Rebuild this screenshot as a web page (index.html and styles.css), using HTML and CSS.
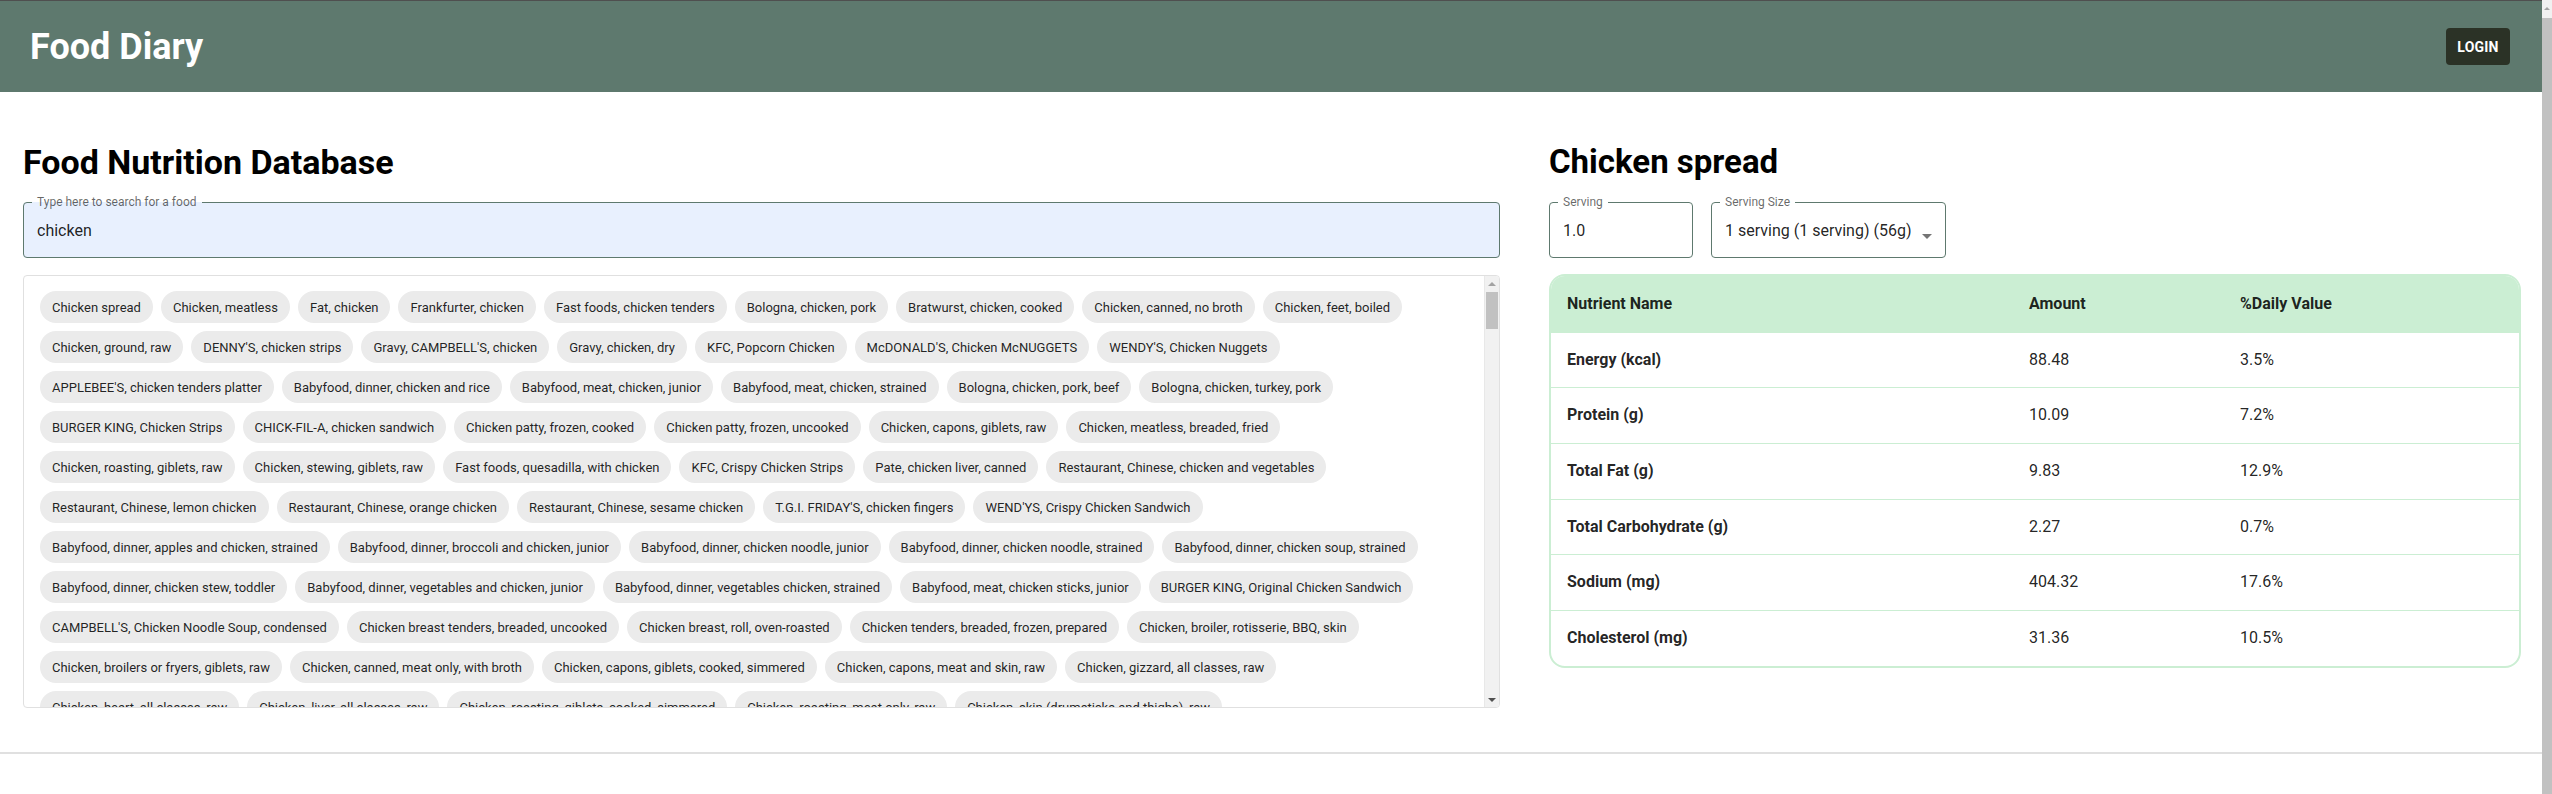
FILE: index.html
```html
<!DOCTYPE html>
<html lang="en">
<head>
<meta charset="utf-8">
<title>Food Diary</title>
<link rel="stylesheet" href="styles.css">
</head>
<body>
<header class="topbar">
  <div class="brand">Food Diary</div>
  <button class="login" type="button">LOGIN</button>
</header>
<main class="content">
  <section class="search-col">
    <h2 class="title title-db">Food Nutrition Database</h2>
    <fieldset class="field field-search">
      <legend>Type here to search for a food</legend>
      <div class="field-value">chicken</div>
    </fieldset>
    <div class="chip-panel">
      <div class="chip-list">
        <span class="chip">Chicken spread</span>
        <span class="chip">Chicken, meatless</span>
        <span class="chip">Fat, chicken</span>
        <span class="chip">Frankfurter, chicken</span>
        <span class="chip">Fast foods, chicken tenders</span>
        <span class="chip">Bologna, chicken, pork</span>
        <span class="chip">Bratwurst, chicken, cooked</span>
        <span class="chip">Chicken, canned, no broth</span>
        <span class="chip">Chicken, feet, boiled</span>
        <span class="chip">Chicken, ground, raw</span>
        <span class="chip">DENNY'S, chicken strips</span>
        <span class="chip">Gravy, CAMPBELL'S, chicken</span>
        <span class="chip">Gravy, chicken, dry</span>
        <span class="chip">KFC, Popcorn Chicken</span>
        <span class="chip">McDONALD'S, Chicken McNUGGETS</span>
        <span class="chip">WENDY'S, Chicken Nuggets</span>
        <span class="chip">APPLEBEE'S, chicken tenders platter</span>
        <span class="chip">Babyfood, dinner, chicken and rice</span>
        <span class="chip">Babyfood, meat, chicken, junior</span>
        <span class="chip">Babyfood, meat, chicken, strained</span>
        <span class="chip">Bologna, chicken, pork, beef</span>
        <span class="chip">Bologna, chicken, turkey, pork</span>
        <span class="chip">BURGER KING, Chicken Strips</span>
        <span class="chip">CHICK-FIL-A, chicken sandwich</span>
        <span class="chip">Chicken patty, frozen, cooked</span>
        <span class="chip">Chicken patty, frozen, uncooked</span>
        <span class="chip">Chicken, capons, giblets, raw</span>
        <span class="chip">Chicken, meatless, breaded, fried</span>
        <span class="chip">Chicken, roasting, giblets, raw</span>
        <span class="chip">Chicken, stewing, giblets, raw</span>
        <span class="chip">Fast foods, quesadilla, with chicken</span>
        <span class="chip">KFC, Crispy Chicken Strips</span>
        <span class="chip">Pate, chicken liver, canned</span>
        <span class="chip">Restaurant, Chinese, chicken and vegetables</span>
        <span class="chip">Restaurant, Chinese, lemon chicken</span>
        <span class="chip">Restaurant, Chinese, orange chicken</span>
        <span class="chip">Restaurant, Chinese, sesame chicken</span>
        <span class="chip">T.G.I. FRIDAY'S, chicken fingers</span>
        <span class="chip">WEND'YS, Crispy Chicken Sandwich</span>
        <span class="chip">Babyfood, dinner, apples and chicken, strained</span>
        <span class="chip">Babyfood, dinner, broccoli and chicken, junior</span>
        <span class="chip">Babyfood, dinner, chicken noodle, junior</span>
        <span class="chip">Babyfood, dinner, chicken noodle, strained</span>
        <span class="chip">Babyfood, dinner, chicken soup, strained</span>
        <span class="chip">Babyfood, dinner, chicken stew, toddler</span>
        <span class="chip">Babyfood, dinner, vegetables and chicken, junior</span>
        <span class="chip">Babyfood, dinner, vegetables chicken, strained</span>
        <span class="chip">Babyfood, meat, chicken sticks, junior</span>
        <span class="chip">BURGER KING, Original Chicken Sandwich</span>
        <span class="chip">CAMPBELL'S, Chicken Noodle Soup, condensed</span>
        <span class="chip">Chicken breast tenders, breaded, uncooked</span>
        <span class="chip">Chicken breast, roll, oven-roasted</span>
        <span class="chip">Chicken tenders, breaded, frozen, prepared</span>
        <span class="chip">Chicken, broiler, rotisserie, BBQ, skin</span>
        <span class="chip">Chicken, broilers or fryers, giblets, raw</span>
        <span class="chip">Chicken, canned, meat only, with broth</span>
        <span class="chip">Chicken, capons, giblets, cooked, simmered</span>
        <span class="chip">Chicken, capons, meat and skin, raw</span>
        <span class="chip">Chicken, gizzard, all classes, raw</span>
        <span class="chip">Chicken, heart, all classes, raw</span>
        <span class="chip">Chicken, liver, all classes, raw</span>
        <span class="chip">Chicken, roasting, giblets, cooked, simmered</span>
        <span class="chip">Chicken, roasting, meat only, raw</span>
        <span class="chip">Chicken, skin (drumsticks and thighs), raw</span>
      </div>
      <div class="scrollbar" aria-hidden="true">
        <div class="sb-button"><span class="arrow-up"></span></div>
        <div class="sb-track"><div class="sb-thumb"></div></div>
        <div class="sb-button"><span class="arrow-down"></span></div>
      </div>
    </div>
  </section>

  <section class="detail-col">
    <h2 class="title title-food">Chicken spread</h2>
    <div class="field-row">
      <fieldset class="field field-serving">
        <legend>Serving</legend>
        <div class="field-value">1.0</div>
      </fieldset>
      <fieldset class="field field-size">
        <legend>Serving Size</legend>
        <div class="field-value">1 serving (1 serving) (56g)</div>
        <svg class="dropdown" viewBox="0 0 24 24" width="24" height="24" aria-hidden="true"><path d="M7 10l5 5 5-5z"/></svg>
      </fieldset>
    </div>
    <div class="nutrients">
      <table class="nutrient-table">
        <colgroup>
          <col class="col-name">
          <col class="col-amount">
          <col class="col-dv">
        </colgroup>
        <thead>
          <tr><th>Nutrient Name</th><th>Amount</th><th>%Daily Value</th></tr>
        </thead>
        <tbody>
          <tr><td class="n">Energy (kcal)</td><td>88.48</td><td>3.5%</td></tr>
          <tr><td class="n">Protein (g)</td><td>10.09</td><td>7.2%</td></tr>
          <tr><td class="n">Total Fat (g)</td><td>9.83</td><td>12.9%</td></tr>
          <tr><td class="n">Total Carbohydrate (g)</td><td>2.27</td><td>0.7%</td></tr>
          <tr><td class="n">Sodium (mg)</td><td>404.32</td><td>17.6%</td></tr>
          <tr><td class="n">Cholesterol (mg)</td><td>31.36</td><td>10.5%</td></tr>
        </tbody>
      </table>
    </div>
  </section>
</main>
<footer class="footer"></footer>
<div class="page-scrollbar" aria-hidden="true">
  <div class="psb-button"><span class="arrow-up small"></span></div>
  <div class="psb-thumb"></div>
</div>
</body>
</html>
```

FILE: styles.css
```css
* { box-sizing: border-box; }

html, body {
  margin: 0;
  padding: 0;
  background: #ffffff;
}

body {
  padding-right: 10px;
  font-family: Roboto, "Liberation Sans", Arial, sans-serif;
  color: rgba(0, 0, 0, 0.87);
}

/* top bar */
.topbar {
  height: 92px;
  border-top: 1px solid #4f4f4f;
  background: #5e796e;
  display: flex;
  align-items: center;
  justify-content: space-between;
  padding: 0 32px 0 30px;
}

.brand {
  color: #ffffff;
  font-size: 36px;
  font-weight: 700;
  line-height: 42px;
}

.login {
  min-width: 64px;
  height: 37px;
  padding: 0 11px;
  border: 0;
  border-radius: 4px;
  background: #2b3226;
  color: #ffffff;
  font-family: Roboto, "Liberation Sans", Arial, sans-serif;
  font-size: 14px;
  font-weight: 700;
  letter-spacing: 0.2px;
}

/* layout */
.content {
  display: grid;
  grid-template-columns: 1477fr 972fr;
  column-gap: 49px;
  padding: 51px 21px 44px 23px;
}

.title {
  margin: 0 0 15px;
  font-size: 32px;
  line-height: 38px;
  font-weight: 700;
  color: #000000;
}

.title-db {
  font-size: 34px;
}

.title-food {
  font-size: 33px;
}

/* outlined fields */
.field {
  position: relative;
  margin: 0;
  min-width: 0;
  border: 1px solid #5e796e;
  border-radius: 4px;
  padding: 0 8px 15.5px;
}

.field legend {
  padding: 0 5px;
  font-size: 12px;
  line-height: 12px;
  color: rgba(0, 0, 0, 0.6);
}

.field-value {
  padding: 10.5px 5px 0;
  font-size: 16px;
  line-height: 23px;
  color: rgba(0, 0, 0, 0.87);
  white-space: nowrap;
}

.field-search {
  background: #e8f0fe;
}

.field-row {
  display: flex;
  gap: 18px;
}

.field-serving { width: 144px; }
.field-size { width: 235px; }

.dropdown {
  position: absolute;
  right: 6px;
  top: 16px;
  fill: rgba(0, 0, 0, 0.54);
}

/* chip list with classic scrollbar */
.chip-panel {
  margin-top: 17px;
  height: 433px;
  border: 1px solid #e0e0e0;
  border-radius: 4px;
  overflow: hidden;
  display: flex;
}

.chip-list {
  flex: 1;
  min-width: 0;
  overflow: hidden;
  padding: 15px 16px;
  display: flex;
  flex-wrap: wrap;
  align-content: flex-start;
  gap: 8px;
}

.chip {
  display: inline-flex;
  align-items: center;
  height: 32px;
  padding: 0 12px;
  border-radius: 16px;
  background: #ebebeb;
  font-size: 13px;
  color: rgba(0, 0, 0, 0.87);
  white-space: nowrap;
}

.scrollbar {
  width: 15px;
  flex: none;
  display: flex;
  flex-direction: column;
  background: #f1f1f1;
  border-left: 1px solid #e8e8e8;
}

.sb-button {
  height: 15px;
  flex: none;
  display: flex;
  align-items: center;
  justify-content: center;
}

.sb-track {
  flex: 1;
}

.sb-thumb {
  height: 37px;
  margin: 1px 1px 0 1px;
  background: #c1c1c1;
}

.arrow-up {
  width: 0;
  height: 0;
  border-left: 4px solid transparent;
  border-right: 4px solid transparent;
  border-bottom: 4px solid #a3a3a3;
}

.arrow-down {
  width: 0;
  height: 0;
  border-left: 4px solid transparent;
  border-right: 4px solid transparent;
  border-top: 4px solid #505050;
}

.arrow-up.small {
  border-left-width: 3px;
  border-right-width: 3px;
  border-bottom-width: 3px;
}

/* nutrient table */
.nutrients {
  margin-top: 16px;
  border: 2px solid #cbeed3;
  border-radius: 16px;
  overflow: hidden;
}

.nutrient-table {
  width: 100%;
  border-collapse: separate;
  border-spacing: 0;
  table-layout: fixed;
  font-size: 16px;
  color: rgba(0, 0, 0, 0.87);
}

.col-name { width: 462px; }
.col-amount { width: 211px; }

.nutrient-table th {
  padding: 16px;
  line-height: 24.7px;
  background: #cbeed3;
  text-align: left;
  font-weight: 700;
}

.nutrient-table td {
  padding: 16px;
  line-height: 22.67px;
}

.nutrient-table tbody tr + tr td {
  border-top: 1px solid #cbeed3;
}

.nutrient-table td.n {
  font-weight: 700;
}

.footer {
  height: 46px;
  border-top: 2px solid #e0e0e0;
}

/* viewport scrollbar */
.page-scrollbar {
  position: fixed;
  top: 0;
  right: 0;
  bottom: 0;
  width: 10px;
  display: flex;
  flex-direction: column;
  background: #f1f1f1;
}

.psb-button {
  height: 17px;
  flex: none;
  display: flex;
  align-items: center;
  justify-content: center;
}

.psb-thumb {
  flex: 1;
  margin-top: 1px;
  background: #c1c1c1;
}
```
